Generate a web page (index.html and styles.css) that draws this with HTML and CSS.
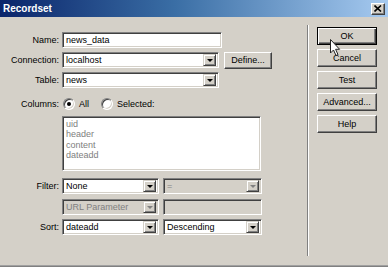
FILE: index.html
```html
<!DOCTYPE html>
<html lang="en">
<head>
    <meta charset="UTF-8">
    <title>Recordset</title>
    <link rel="stylesheet" href="styles.css">
</head>
<body>
    <div class="window">
        <div class="titlebar">
            <span class="title">Recordset</span>
            <div class="close">
                <svg width="8" height="7" viewBox="0 0 8 7"><path d="M0.5 0.5 L7 6.5 M7 0.5 L0.5 6.5" stroke="#000" stroke-width="1.6"/></svg>
            </div>
        </div>
        <div class="content">
            <div class="form">
                <div class="row r-name">
                    <span class="lbl">Name:</span>
                    <div class="field w-name"><span class="val">news_data</span></div>
                </div>
                <div class="row r-conn">
                    <span class="lbl">Connection:</span>
                    <div class="field select w-wide"><span class="val">localhost</span><span class="arrow"></span></div>
                    <div class="btn define">Define...</div>
                </div>
                <div class="row r-table">
                    <span class="lbl">Table:</span>
                    <div class="field select w-wide"><span class="val">news</span><span class="arrow"></span></div>
                </div>
                <div class="row r-cols">
                    <span class="lbl">Columns:</span>
                    <span class="radio checked"></span><span class="opt">All</span>
                    <span class="radio"></span><span class="opt">Selected:</span>
                </div>
                <div class="row r-list">
                    <span class="lbl"></span>
                    <div class="field listbox">
                        <div>uid</div>
                        <div>header</div>
                        <div>content</div>
                        <div>dateadd</div>
                    </div>
                </div>
                <div class="row r-filter">
                    <span class="lbl">Filter:</span>
                    <div class="field select w-half"><span class="val">None</span><span class="arrow"></span></div>
                    <div class="field select w-half2 disabled"><span class="val">=</span><span class="arrow"></span></div>
                </div>
                <div class="row r-url">
                    <span class="lbl"></span>
                    <div class="field select w-half disabled"><span class="val">URL Parameter</span><span class="arrow"></span></div>
                    <div class="field w-half2 disabled"></div>
                </div>
                <div class="row r-sort">
                    <span class="lbl">Sort:</span>
                    <div class="field select w-half"><span class="val">dateadd</span><span class="arrow"></span></div>
                    <div class="field select w-half2"><span class="val">Descending</span><span class="arrow"></span></div>
                </div>
            </div>
            <div class="sep"></div>
            <div class="side">
                <div class="btn default">OK</div>
                <div class="btn">Cancel</div>
                <div class="btn">Test</div>
                <div class="btn">Advanced...</div>
                <div class="btn">Help</div>
            </div>
        </div>
        <svg class="cursor" width="12" height="18" viewBox="0 0 12 18"><path d="M0.5 0.5 L0.5 14 L3.5 11 L6 16.5 L8 15.6 L5.6 10.3 L9.6 10.3 Z" fill="#fff" stroke="#222" stroke-width="1" stroke-linejoin="round"/></svg>
    </div>
</body>
</html>
```

FILE: styles.css
```css
* {
    margin: 0;
    padding: 0;
    box-sizing: border-box;
}
body {
    background: #d4d0c8;
    font-family: "Liberation Sans", Arial, sans-serif;
    font-size: 9px;
    color: #000;
}
.window {
    position: relative;
    width: 388px;
    height: 267px;
    background: #d4d0c8;
    box-shadow: inset 0 -1px 0 #808080, inset 0 -2px 0 #a0a0a0;
    overflow: hidden;
}
.titlebar {
    height: 17px;
    display: flex;
    align-items: center;
    justify-content: space-between;
    padding: 0 3px 0 3px;
    background: linear-gradient(to right, #0a246a 0%, #3a6ea5 45%, #a6caf0 100%);
}
.title {
    color: #fff;
    font-weight: bold;
    font-size: 10px;
}
.close {
    width: 14px;
    height: 12px;
    display: flex;
    align-items: center;
    justify-content: center;
    background: #d4d0c8;
    border: 1px solid;
    border-color: #fff #404040 #404040 #fff;
    box-shadow: inset -1px -1px 0 #808080;
}
.content {
    display: flex;
}
.form {
    width: 307px;
    padding-top: 15px;
}
.row {
    display: flex;
    align-items: center;
    height: 16px;
}
.r-conn, .r-table { margin-top: 4px; }
.r-cols { margin-top: 10px; height: 12px; }
.r-list { margin-top: 6px; height: 55px; align-items: stretch; }
.r-filter { margin-top: 7px; }
.r-url { margin-top: 5px; }
.r-sort { margin-top: 4px; }
.lbl {
    width: 59px;
    margin-right: 3px;
    text-align: right;
    white-space: nowrap;
}
.field {
    height: 16px;
    display: flex;
    align-items: center;
    background: #fff;
    border: 1px solid;
    border-color: #808080 #fff #fff #808080;
    box-shadow: inset 1px 1px 0 #404040, inset -1px -1px 0 #d4d0c8;
    padding: 2px;
}
.val {
    flex: 1;
    padding-left: 1px;
    white-space: nowrap;
}
.w-name { width: 160px; }
.w-wide { width: 157px; }
.w-half { width: 97px; }
.w-half2 { width: 99px; margin-left: 4px; }
.arrow {
    width: 13px;
    height: 12px;
    display: flex;
    align-items: center;
    justify-content: center;
    background: #d4d0c8;
    border: 1px solid;
    border-color: #d4d0c8 #404040 #404040 #d4d0c8;
    box-shadow: inset 1px 1px 0 #fff, inset -1px -1px 0 #808080;
}
.arrow::after {
    content: "";
    border-left: 3px solid transparent;
    border-right: 3px solid transparent;
    border-top: 3px solid #000;
    margin-top: 1px;
}
.disabled {
    background: #d4d0c8;
    color: #808080;
}
.disabled .arrow::after {
    border-top-color: #808080;
}
.listbox {
    width: 199px;
    height: 55px;
    display: block;
    padding: 2px 3px;
    color: #808080;
    line-height: 10.4px;
}
.radio {
    width: 12px;
    height: 12px;
    border-radius: 50%;
    background: #fff;
    border: 1px solid;
    border-color: #808080 #fff #fff #808080;
    box-shadow: inset 1px 1px 0 #404040, inset -1px -1px 0 #d4d0c8;
    display: flex;
    align-items: center;
    justify-content: center;
    margin-left: 1px;
}
.radio.checked::after {
    content: "";
    width: 4px;
    height: 4px;
    border-radius: 50%;
    background: #000;
}
.opt {
    margin-left: 4px;
    margin-right: 11px;
}
.btn {
    height: 17px;
    display: flex;
    align-items: center;
    justify-content: center;
    background: #d4d0c8;
    border: 1px solid;
    border-color: #fff #404040 #404040 #fff;
    box-shadow: inset -1px -1px 0 #808080;
    white-space: nowrap;
}
.define {
    width: 48px;
    margin-left: 5px;
}
.sep {
    width: 2px;
    height: 231px;
    margin-top: 8px;
    border-left: 1px solid #808080;
    border-right: 1px solid #fff;
}
.side {
    display: flex;
    flex-direction: column;
    gap: 4px;
    padding-top: 10px;
    padding-left: 8px;
}
.side .btn {
    width: 60px;
    height: 18px;
}
.side .default {
    border: 1px solid #000;
    box-shadow: inset 1px 1px 0 #fff, inset -1px -1px 0 #404040, inset -2px -2px 0 #808080;
}
.cursor {
    position: absolute;
    left: 330px;
    top: 39px;
}
```
